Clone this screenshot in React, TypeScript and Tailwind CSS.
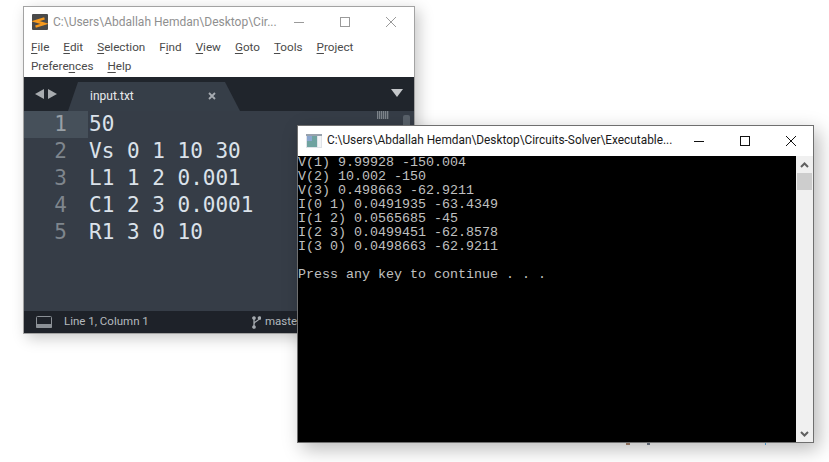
const MENU_ROW_1 = [
  { pre: "", key: "F", post: "ile" },
  { pre: "", key: "E", post: "dit" },
  { pre: "", key: "S", post: "election" },
  { pre: "F", key: "i", post: "nd" },
  { pre: "", key: "V", post: "iew" },
  { pre: "", key: "G", post: "oto" },
  { pre: "", key: "T", post: "ools" },
  { pre: "", key: "P", post: "roject" },
];

const MENU_ROW_2 = [
  { pre: "Prefere", key: "n", post: "ces" },
  { pre: "", key: "H", post: "elp" },
];

const CODE = ["50", "Vs 0 1 10 30", "L1 1 2 0.001", "C1 2 3 0.0001", "R1 3 0 10"];

const OUTPUT = [
  "V(1) 9.99928 -150.004",
  "V(2) 10.002 -150",
  "V(3) 0.498663 -62.9211",
  "I(0 1) 0.0491935 -63.4349",
  "I(1 2) 0.0565685 -45",
  "I(2 3) 0.0499451 -62.8578",
  "I(3 0) 0.0498663 -62.9211",
  "",
  "Press any key to continue . . .",
];

function MenuItem({ pre, hot, post }: { pre: string; hot: string; post: string }) {
  return (
    <span>
      {pre}
      <span className="underline underline-offset-2">{hot}</span>
      {post}
    </span>
  );
}

function WinControls({ color }: { color: string }) {
  return (
    <div className="flex items-center gap-[34px]">
      <svg width="12" height="12" viewBox="0 0 12 12" fill="none" stroke={color}>
        <path d="M1 6.5h10" />
      </svg>
      <svg width="12" height="12" viewBox="0 0 12 12" fill="none" stroke={color}>
        <rect x="1.5" y="1.5" width="9" height="9" />
      </svg>
      <svg width="12" height="12" viewBox="0 0 12 12" fill="none" stroke={color}>
        <path d="M1 1l10 10M11 1L1 11" />
      </svg>
    </div>
  );
}

function SublimeWindow() {
  return (
    <div className="absolute left-[23px] top-[6px] flex h-[328px] w-[392px] flex-col border border-[#a3a3a3] bg-white shadow-[4px_4px_14px_rgba(0,0,0,0.22)]">
      {/* title bar */}
      <div className="flex h-[30px] items-center pl-[8px] pr-[17px]">
        <svg width="16" height="16" viewBox="0 0 16 16" className="shrink-0">
          <rect width="16" height="16" rx="1" fill="#4a4a4a" />
          <path d="M12.5 4.3L3.5 7.2L12.5 9.8L3.5 12.7" fill="none" stroke="#f79a1e" strokeWidth="2.4" />
        </svg>
        <span className="ml-[5px] w-[240px] whitespace-nowrap text-[12px] text-[#8f8f8f]">
          C:\Users\Abdallah Hemdan\Desktop\Cir...
        </span>
        <div className="ml-auto">
          <WinControls color="#9a9a9a" />
        </div>
      </div>
      {/* menu */}
      <div className="flex h-[39px] flex-col pl-[7px] pt-[1px] text-[11.7px] leading-[19px] text-[#4a4a4a]">
        <div className="flex h-[19px] gap-[14px]">
          {MENU_ROW_1.map((m) => (
            <MenuItem key={m.pre + m.key} pre={m.pre} hot={m.key} post={m.post} />
          ))}
        </div>
        <div className="flex h-[19px] gap-[14px]">
          {MENU_ROW_2.map((m) => (
            <MenuItem key={m.pre + m.key} pre={m.pre} hot={m.key} post={m.post} />
          ))}
        </div>
      </div>
      {/* tab bar */}
      <div className="mt-[1px] flex h-[34px] items-end bg-[#20252c]">
        <div className="flex h-[34px] w-[44px] items-center justify-center gap-[4px] pb-[1px]">
          <svg width="9" height="10" viewBox="0 0 9 10" fill="#a8acb0"><path d="M9 0v10L0 5z" /></svg>
          <svg width="9" height="10" viewBox="0 0 9 10" fill="#a8acb0"><path d="M0 0v10l9-5z" /></svg>
        </div>
        <div className="flex h-[29px] w-[172px] items-center pb-[2px] pl-[22px] pr-[24px] text-[12px] text-[#e8eaec] bg-[#363e48] [clip-path:polygon(0_100%,10px_0,157px_0,172px_100%)]">
          <span>input.txt</span>
          <svg width="8" height="8" viewBox="0 0 8 8" stroke="#a6abb1" strokeWidth="1.8" className="ml-auto">
            <path d="M1 1l6 6M7 1L1 7" />
          </svg>
        </div>
        <svg width="12" height="8" viewBox="0 0 12 8" fill="#c4c7ca" className="mb-[14px] ml-auto mr-[11px]">
          <path d="M0 0h12L6 8z" />
        </svg>
      </div>
      {/* editor */}
      <div className="relative flex-1 overflow-hidden bg-[#363d47] font-['DejaVu_Sans_Mono',monospace] text-[21px] leading-[27px]">
        {CODE.map((line, i) => (
          <div key={i} className="flex h-[27px]">
            <div
              className={`w-[64px] pr-[21px] text-right ${i === 0 ? "bg-[#46505a] text-[#99a0a6]" : "text-[#7f868d]"}`}
            >
              {i + 1}
            </div>
            <div className="pl-[1px] text-[#dbe2ea]">{line}</div>
          </div>
        ))}
        {/* minimap and scrollbar */}
        <div className="absolute left-[353px] top-0 h-[8px] w-[12px] bg-[repeating-linear-gradient(90deg,#7d848b_0_1px,#4b535c_1px_2px)]" />
        <div className="absolute left-[379px] top-[4px] h-[14px] w-[7px] rounded-[2px] bg-[#59616a]" />
      </div>
      {/* status bar */}
      <div className="flex h-[22px] items-center bg-[#1e2229] text-[11.5px] text-[#b4b9be]">
        <svg width="16" height="12" viewBox="0 0 16 12" className="ml-[12px] shrink-0">
          <rect x="0.5" y="0.5" width="15" height="11" rx="1" fill="none" stroke="#8b9096" />
          <rect x="0" y="8" width="16" height="4" rx="1" fill="#8b9096" />
        </svg>
        <span className="ml-[12px] w-[188px]">Line 1, Column 1</span>
        <svg width="9" height="13" viewBox="0 0 9 13" fill="none" stroke="#a5aaaf" strokeWidth="1.3" className="shrink-0">
          <circle cx="2" cy="2" r="1.2" fill="#a5aaaf" />
          <circle cx="2" cy="11" r="1.2" fill="#a5aaaf" />
          <circle cx="7.5" cy="2" r="1.2" fill="#a5aaaf" />
          <path d="M2 2v9M7.5 2c0 3-5.5 3-5.5 6" />
        </svg>
        <span className="ml-[4px]">master</span>
      </div>
    </div>
  );
}

function ConsoleWindow() {
  return (
    <div className="absolute left-[297px] top-[125px] flex h-[318px] w-[517px] flex-col border border-[#6f6f6f] bg-white shadow-[5px_6px_18px_rgba(0,0,0,0.28)]">
      <div className="flex h-[30px] shrink-0 items-center pl-[8px] pr-[16px]">
        <svg width="16" height="14" viewBox="0 0 16 14" className="shrink-0">
          <rect width="16" height="14" fill="#dfe3e8" />
          <rect x="0" y="0" width="16" height="2" fill="#98a2ad" />
          <rect x="1" y="2" width="10" height="11" fill="#6fa3a0" />
          <rect x="1" y="2" width="5" height="5" fill="#8aa6cf" />
          <rect x="12" y="2" width="3" height="11" fill="#f2f4f6" />
        </svg>
        <span className="ml-[5px] w-[350px] whitespace-nowrap text-[11.85px] text-[#1a1a1a]">
          C:\Users\Abdallah Hemdan\Desktop\Circuits-Solver\Executable...
        </span>
        <div className="ml-auto">
          <WinControls color="#111111" />
        </div>
      </div>
      <div className="flex min-h-0 flex-1">
        <div className="flex-1 bg-black font-['Liberation_Mono',monospace] text-[13.33px] leading-[14px] text-[#c0c0c0]">
          {OUTPUT.map((line, i) => (
            <div key={i} className="h-[14px] whitespace-pre">
              {line}
            </div>
          ))}
        </div>
        <div className="flex w-[17px] flex-col bg-[#f0f0f0]">
          <div className="flex h-[17px] items-center justify-center">
            <svg width="9" height="6" viewBox="0 0 9 6" fill="none" stroke="#606060" strokeWidth="2">
              <path d="M1 5l3.5-3.5L8 5" />
            </svg>
          </div>
          <div className="mx-[1px] h-[17px] bg-[#cdcdcd]" />
          <div className="mt-auto flex h-[17px] items-center justify-center">
            <svg width="9" height="6" viewBox="0 0 9 6" fill="none" stroke="#606060" strokeWidth="2">
              <path d="M1 1l3.5 3.5L8 1" />
            </svg>
          </div>
        </div>
      </div>
    </div>
  );
}

export default function App() {
  return (
    <div className="relative h-[462px] w-[829px] overflow-hidden bg-white font-['Roboto',sans-serif]">
      <SublimeWindow />
      <ConsoleWindow />
      {/* bits of the page behind, showing under the console */}
      <div className="absolute left-[626px] top-[443px] h-[2px] w-[4px] bg-[#8a6d5a]" />
      <div className="absolute left-[647px] top-[443px] h-[2px] w-[3px] bg-[#5c6470]" />
      <div className="absolute left-[765px] top-[443px] h-[2px] w-[1px] bg-[#4a90c0]" />
    </div>
  );
}
